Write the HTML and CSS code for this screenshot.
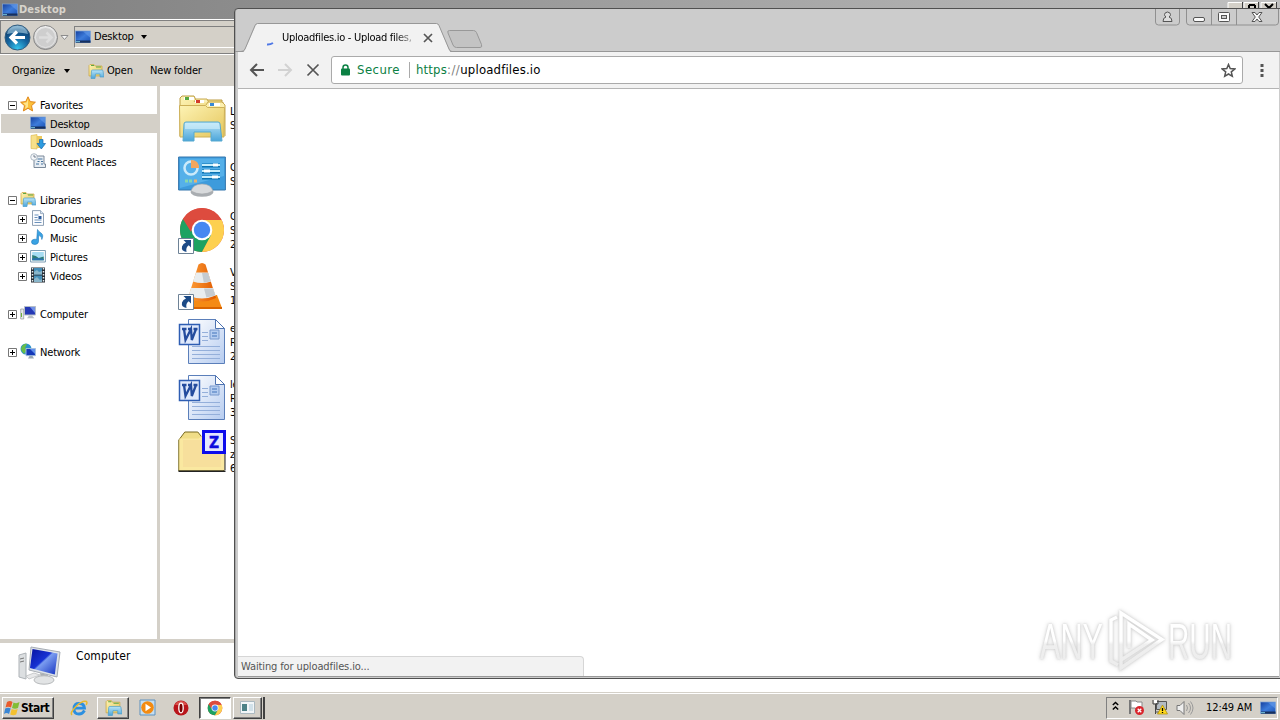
FILE: index.html
```html
<!DOCTYPE html>
<html lang="en">
<head>
<meta charset="utf-8">
<title>Desktop</title>
<link rel="stylesheet" href="styles.css">
</head>
<body>
<svg class="defs" aria-hidden="true">
<defs>
<linearGradient id="gBlue" x1="0" y1="0" x2="1" y2="1"><stop offset="0" stop-color="#163f9d"/><stop offset=".5" stop-color="#3d7cdb"/><stop offset="1" stop-color="#1c52b5"/></linearGradient>
<linearGradient id="gFold" x1="0" y1="0" x2="1" y2="1"><stop offset="0" stop-color="#fdf3b4"/><stop offset="1" stop-color="#e5c65c"/></linearGradient>
<linearGradient id="gSky" x1="0" y1="0" x2="0" y2="1"><stop offset="0" stop-color="#b9e4f6"/><stop offset="1" stop-color="#4ba5da"/></linearGradient>
<linearGradient id="gDoc" x1="0" y1="0" x2="1" y2="1"><stop offset="0" stop-color="#fff"/><stop offset="1" stop-color="#b6ccf0"/></linearGradient>
<radialGradient id="gNav" cx=".5" cy=".95" r=".9"><stop offset="0" stop-color="#35c5ee"/><stop offset=".5" stop-color="#14649f"/><stop offset=".85" stop-color="#0e4577"/><stop offset="1" stop-color="#7aa6c6"/></radialGradient>
<linearGradient id="gGrey" x1="0" y1="0" x2="0" y2="1"><stop offset="0" stop-color="#f4f4f4"/><stop offset="1" stop-color="#b4b4b4"/></linearGradient>
<linearGradient id="gScreen" x1="0" y1="0" x2="1" y2="1"><stop offset="0" stop-color="#0713a0"/><stop offset=".45" stop-color="#1733d4"/><stop offset=".5" stop-color="#7b9df0"/><stop offset="1" stop-color="#1431c0"/></linearGradient>
<linearGradient id="gCone" x1="0" y1="0" x2="1" y2="0"><stop offset="0" stop-color="#ffa03a"/><stop offset="1" stop-color="#e05a00"/></linearGradient>
<linearGradient id="gMark" gradientUnits="userSpaceOnUse" x1="0" y1="8" x2="0" y2="64"><stop offset="0" stop-color="#fff"/><stop offset=".5" stop-color="#fff"/><stop offset=".56" stop-color="#efefef"/><stop offset="1" stop-color="#ececec"/></linearGradient>

<symbol id="desk" viewBox="0 0 16 14"><rect x=".5" y="1" width="15" height="11.5" fill="url(#gBlue)" stroke="#7fa5d8" stroke-width=".7"/><path d="M1 10.500h14.500v2.300H1z" fill="#17305e"/><path d="M1 11.200h4v1H1z" fill="#7fd0e8"/><path d="M8 1.500h7v6z" fill="#6fa4ee" opacity=".5"/></symbol>
<symbol id="lib" viewBox="0 0 16 16"><path d="M1 2.500l1-1h4l1 1.500h7v10H1z" fill="url(#gFold)" stroke="#c9a541" stroke-width=".7"/><path d="M3 2.500h3M8 4h5" stroke="#5ca847"/><path d="M3.500 8q0-1 1-1h9.500q1 0 1 1l1 6h-4v-3H7.500l-.5 4.500H3z" fill="url(#gSky)" stroke="#4d9fcc" stroke-width=".7"/></symbol>
<symbol id="star" viewBox="0 0 16 16"><path d="M8 .8l2.200 4.800 5.200.6-3.900 3.500 1.100 5.200L8 12.300l-4.600 2.600 1.100-5.200L.6 6.200l5.200-.6z" fill="#fbc03a" stroke="#e0861a"/><path d="M8 3v8l-3 2 .8-3.600L3 7l3.600-.5z" fill="#ffe48c"/></symbol>
<symbol id="down" viewBox="0 0 16 16"><path d="M1 1.500l6-1v14.500l-6-.5z" fill="#f7e08a" stroke="#d9b44a" stroke-width=".6"/><path d="M7 2h5v12H7z" fill="#ecc95e"/><path d="M9.500 5.500h3.500v4h2.500l-4.200 5.500L7 9.500h2.500z" fill="#2d9be0" stroke="#1769ad" stroke-width=".7"/></symbol>
<symbol id="recent" viewBox="0 0 16 16"><path d="M4 3h10v8h1.500v3.500H4z" fill="#e7edf3" stroke="#6d7e90" stroke-width=".9"/><path d="M7.500 6h5M7.500 8.500h2M11 8.500h2M6 11h3M11 11h2" stroke="#46749f"/><circle cx="4" cy="4" r="3.300" fill="#f5f7fa" stroke="#9ba9b6" stroke-width=".8"/><path d="M4 2v2h2" stroke="#567" fill="none" stroke-width=".8"/></symbol>
<symbol id="docs" viewBox="0 0 16 16"><path d="M2.500.6h8l3 3v11.800h-11z" fill="#fcfdff" stroke="#8296ad" stroke-width=".9"/><path d="M10.500.6v3h3" fill="#d8e6f5" stroke="#8296ad" stroke-width=".7"/><path d="M4.500 5h4M4.500 7.500h3M4.500 10h7M4.500 12.500h7" stroke="#6b91bb"/><path d="M8.500 6h3v3h-3z" fill="#2c5c9e"/></symbol>
<symbol id="music" viewBox="0 0 16 16"><path d="M7.500.5q1 2 3.500 3.500 3 2 .8 6.500.3-3.500-3.300-4.200v6.200q0 2.700-3.500 3Q1.500 15.500 1.500 13q0-2.500 3-2.700 1.200-.2 2.200.3z" fill="#3aa3e3" stroke="#1d78bd" stroke-width=".6"/></symbol>
<symbol id="pics" viewBox="0 0 16 16"><path d="M.6 2.500h14.800v11.500H.6z" fill="#fff" stroke="#6f93ab" stroke-width=".9"/><path d="M2.200 4h11.600v8.300H2.200z" fill="#a6dcf2"/><path d="M2.200 7l3.500 1 3 2 5-1.500v3.800H2.200z" fill="#2d7c76"/><path d="M2.200 10.500q5-1 11.600.5v1.300H2.200z" fill="#2b72ad"/></symbol>
<symbol id="vids" viewBox="0 0 16 16"><path d="M1 .5h14v15H1z" fill="#252c35"/><path d="M4 1h8v6.500H4zM4 8.500h8V15H4z" fill="#458fb9"/><path d="M4 5l3-2 2 2 3-1v3.500H4zM4 12l3-2 3 3 2-1v3H4z" fill="#89b6cb"/><path d="M2.500 1v14M13.500 1v14" stroke="#e6edf0" stroke-width="1.500" stroke-dasharray="1.500 1.500"/></symbol>
<symbol id="comp" viewBox="0 0 16 16"><path d="M.7 4h3v10h-3z" fill="#e6e8ea" stroke="#8e959b" stroke-width=".7"/><path d="M1.500 8v4" stroke="#6cb23a"/><path d="M4.500 1.500h11v8.500h-11z" fill="#2539b5" stroke="#b4bdc8"/><path d="M10 2h5v6z" fill="#7191e8"/><path d="M9 10.500h3l2.500 2.800H7z" fill="#b9bfc5"/></symbol>
<symbol id="net" viewBox="0 0 16 16"><circle cx="6" cy="6" r="5.500" fill="#2a91cd"/><path d="M2 3q3-3 5-2L5 5l2 2-3 4Q1 8 1 6z" fill="#67bd48"/><path d="M6 5.500h9.500v7.200H6z" fill="#1438b8" stroke="#a9c4de" stroke-width=".9"/><path d="M10 6h5v5z" fill="#6090ec"/><path d="M9.500 13h3l1.500 2.500H8z" fill="#98a7b5"/></symbol>
<symbol id="plus" viewBox="0 0 9 9"><path d="M.5.5h8v8h-8z" fill="#fff" stroke="#777"/><path d="M2 4.500h5M4.500 2v5" stroke="#000"/></symbol>
<symbol id="minus" viewBox="0 0 9 9"><path d="M.5.5h8v8h-8z" fill="#fff" stroke="#777"/><path d="M2 4.500h5" stroke="#000"/></symbol>
<symbol id="chrome" viewBox="0 0 48 48"><circle cx="24" cy="24" r="22" fill="#dd4b3e"/><path d="M24 24L4.950 13A22 22 0 0 0 24 46l9.500-16.500z" fill="#1da261"/><path d="M24 14h19.600A22 22 0 0 1 24 46l9-17z" fill="#fdd050"/><path d="M4.950 13A22 22 0 0 1 43.600 14H24z" fill="#dd4b3e"/><path d="M5 13l8 13 3-7 8-5z" fill="#dd4b3e"/><circle cx="24" cy="24" r="10.300" fill="#fff"/><circle cx="24" cy="24" r="8.200" fill="#4688f1"/></symbol>
<symbol id="short" viewBox="0 0 16 16"><path d="M.5.5h15v15H.5z" fill="#fff" stroke="#6e8296"/><path d="M13 2v7.500l-2.300-2.200Q7.500 9.500 8.500 14 3 13 4 8.500 5 5.500 8 4.500L5.500 2z" fill="#1d4b87"/></symbol>
<symbol id="word" viewBox="0 0 48 48"><path d="M10.500 1.500h27l9 9v35h-36z" fill="url(#gDoc)" stroke="#5b7fba"/><path d="M37.500 1.500v9h9z" fill="#fff" stroke="#4e73b1"/><path d="M24 14.500h6M24 18.500h6M24 22.500h6M14 28.500h28M14 32.500h28M14 36.500h28M14 40.500h28" stroke="#94afda"/><path d="M32 12h9v9h-9z" fill="#b5cdf0" stroke="#7899cd"/><path d="M34 14h5v2h-5zM34 17h5v2h-5z" fill="#7ba0d5"/><path d="M1.500 6.500h20v20h-20z" fill="#dfe9fb" stroke="#2e5eb3" stroke-width="1.500"/><path d="M4 11h4.500M10 11h4M15.500 11h4M6 11l1.500 11L13 11l.8 11L18 11" fill="none" stroke="#244c9e" stroke-width="2.300"/></symbol>
<symbol id="folders" viewBox="0 0 48 48"><path d="M2 4l2-2h12l2 4h26v36H2z" fill="url(#gFold)" stroke="#bc9d45"/><path d="M6 3h10v3H6z" fill="#fff"/><path d="M7 3h4v3H7z" fill="#58a83f"/><path d="M16 8l2-3h11l2 4h15" fill="#fbf0b5" stroke="#c8a94f"/><path d="M17 6h9v3h-9z" fill="#fff"/><path d="M18 6h4v3h-4z" fill="#d33b2a"/><path d="M28 11l2-3h14l3 3v31" fill="#fcf0b0" stroke="#c8a94f"/><path d="M31 9h11v3H31z" fill="#fff"/><path d="M32 9h4v3h-4z" fill="#3a89d5"/><path d="M1.500 11.500h26l2 2h17L46 43H2z" fill="url(#gFold)" stroke="#cdb058"/><path d="M6 30q0-2 2-2h32q2 0 2 2l2 17H33v-9H16v9H5z" fill="url(#gSky)" stroke="#57a9cf"/><path d="M7 29h34l1 6H7z" fill="#d3f0fb" opacity=".6"/></symbol>
<symbol id="panel" viewBox="0 0 48 48"><path d="M.6 7h46.800v33H.6z" fill="#3d9bdc" stroke="#3476ad"/><path d="M2 8.500h44V26L2 38z" fill="#55b0e9"/><circle cx="13" cy="18" r="6.500" fill="none" stroke="#cbeafa" stroke-width="2.500"/><path d="M13 18v-8q8 0 8 8z" fill="#f4a65b"/><path d="M24 15.500h18M24 21.500h18M24 27.500h18" stroke="#0a72b1" stroke-width="4"/><path d="M24 15h18M24 21h18M24 27h18" stroke="#c8eefb" stroke-width="2"/><path d="M35 15h5M26 21h6M34 27h6" stroke="#fff" stroke-width="3"/><path d="M7 31h3M11 31h3" stroke="#86d8ad" stroke-width="3"/><path d="M16 31h3" stroke="#e8b26e" stroke-width="3"/><ellipse cx="24" cy="42" rx="11.500" ry="4.800" fill="#a9adb1"/><path d="M13 41q2-7 11-7t11 7q-11 6-22 0" fill="#d8dadc" stroke="#a5a8ab" stroke-width=".6"/></symbol>
<symbol id="vlc" viewBox="0 0 48 48"><path d="M10 33h29l5 13H4z" fill="#f58a14"/><path d="M4 45h40v2H4z" fill="#d96400"/><path d="M20.500 2.500q3.500-3 7 0L38 36q-14 7-28 0z" fill="url(#gCone)"/><path d="M18 10.500h12l3 9q-9 3-18 0zM13 26h22l2.700 7.500q-14 6-27 0z" fill="#e9edef"/><path d="M24 11h6l2.800 8.500-7 1zM26 26.500h9l2.400 7-9 2z" fill="#c5cbd0"/></symbol>
<symbol id="zip" viewBox="0 0 48 48"><path d="M.8 10l6-8h13l4 5h22v34H.8z" fill="#f0dd87" stroke="#766820"/><path d="M1.500 8.500h19l4-3h22V40h-45z" fill="#fae8a0"/><path d="M5 10h38v27H5z" fill="#f7df9c"/><path d="M.5 40.500h47V42H.5zM46.500 10v31h1V10z" fill="#222"/><path d="M25.500 1.500h21v21h-21z" fill="#e4e7ff" stroke="#0c0cec" stroke-width="3"/><text x="36" y="17.500" text-anchor="middle" font-family="DejaVu Sans" font-weight="bold" font-size="15.500" letter-spacing="0" fill="#0c0cdd" stroke="#0c0cdd" stroke-width=".4">Z</text></symbol>
</defs>
</svg>

<main class="desktop">
<section class="explorer">
  <header class="title"><svg width="16" height="14"><use href="#desk"/></svg><span>Desktop</span></header>
  <nav class="address">
    <svg class="arrows" width="70" height="30" viewBox="0 0 70 30"><circle cx="17.500" cy="15.500" r="12.500" fill="url(#gNav)" stroke="#315c7e"/><path d="M7 12Q9 4 17.500 4T28 12q-10-3-21 0" fill="#a3cce2" opacity=".65"/><path d="M25 15.500H12M17 9.500l-6 6 6 6" fill="none" stroke="#fff" stroke-width="3.200"/><circle cx="45.500" cy="15.500" r="12" fill="url(#gGrey)" stroke="#858585"/><circle cx="45.500" cy="15.500" r="10" fill="#cecece" stroke="#e6e6e6"/><path d="M39 15.500h11M46.500 10.500l5 5-5 5" fill="none" stroke="#ddd" stroke-width="2.500"/><path d="M61 13.500h7l-3.500 4z" fill="#f5f5f5" stroke="#8c8c8c"/></svg>
    <div class="path"><svg width="16" height="14"><use href="#desk"/></svg><span>Desktop</span><i class="caret"></i></div>
  </nav>
  <div class="commands"><span class="organize">Organize</span><i class="caret"></i><svg class="open-icon" width="16" height="16"><use href="#lib"/></svg><span class="open">Open</span><span>New folder</span></div>
  <div class="body">
    <aside class="tree">
      <div class="row"><svg class="pm"><use href="#minus"/></svg><svg class="ic"><use href="#star"/></svg><span>Favorites</span></div>
      <div class="row child selected"><svg class="ic"><use href="#desk"/></svg><span>Desktop</span></div>
      <div class="row child"><svg class="ic"><use href="#down"/></svg><span>Downloads</span></div>
      <div class="row child"><svg class="ic"><use href="#recent"/></svg><span>Recent Places</span></div>
      <div class="row"></div>
      <div class="row"><svg class="pm"><use href="#minus"/></svg><svg class="ic"><use href="#lib"/></svg><span>Libraries</span></div>
      <div class="row sub"><svg class="pm"><use href="#plus"/></svg><svg class="ic"><use href="#docs"/></svg><span>Documents</span></div>
      <div class="row sub"><svg class="pm"><use href="#plus"/></svg><svg class="ic"><use href="#music"/></svg><span>Music</span></div>
      <div class="row sub"><svg class="pm"><use href="#plus"/></svg><svg class="ic"><use href="#pics"/></svg><span>Pictures</span></div>
      <div class="row sub"><svg class="pm"><use href="#plus"/></svg><svg class="ic"><use href="#vids"/></svg><span>Videos</span></div>
      <div class="row"></div>
      <div class="row"><svg class="pm"><use href="#plus"/></svg><svg class="ic"><use href="#comp"/></svg><span>Computer</span></div>
      <div class="row"></div>
      <div class="row"><svg class="pm"><use href="#plus"/></svg><svg class="ic"><use href="#net"/></svg><span>Network</span></div>
    </aside>
    <div class="files">
      <div class="file"><svg><use href="#folders"/></svg><p>L<br>S</p></div>
      <div class="file"><svg><use href="#panel"/></svg><p>C<br>S</p></div>
      <div class="file"><svg><use href="#chrome"/><use href="#short" x="0" y="32" width="16" height="16"/></svg><p>G<br>S<br>2</p></div>
      <div class="file"><svg><use href="#vlc"/><use href="#short" x="0" y="32" width="16" height="16"/></svg><p>V<br>S<br>1</p></div>
      <div class="file"><svg><use href="#word"/></svg><p>e<br>R<br>2</p></div>
      <div class="file"><svg><use href="#word"/></svg><p>le<br>R<br>3</p></div>
      <div class="file"><svg><use href="#zip"/></svg><p>S<br>z<br>6</p></div>
    </div>
  </div>
  <footer class="details">
    <svg width="46" height="40" viewBox="0 0 46 40"><path d="M1 9l7-2v26l-7-2z" fill="#dcdfe1" stroke="#aeb3b7"/><path d="M2 13l4-1M2 16l4-1" stroke="#777"/><path d="M13 1l29 5-3 25-28-7z" fill="#dde2e8" stroke="#a7adb4"/><path d="M14.500 3l25 4.500-2.700 21L12 22z" fill="url(#gScreen)"/><path d="M22 27l8 2-1 4h-6z" fill="#aaafb3"/><ellipse cx="26" cy="34" rx="10" ry="4.200" fill="#e2e4e5" stroke="#b7babc"/><path d="M8 30l8-3 6 2-11 4z" fill="#e8e9ea" stroke="#b7babc" stroke-width=".7"/></svg>
    <span>Computer</span>
  </footer>
</section>

<div class="behind-buttons"><svg width="52" height="10" viewBox="0 0 52 10"><path d="M1 2h15v8H1zM17 2h15v8H17zM34 2h15v8H34z" fill="#d4d0c8"/><path d="M1 10V2.500h15M17 10V2.500h15M34 10V2.500h15" stroke="#fff" fill="none"/><path d="M15.500 2v8M31.500 2v8M49.500 2v8" stroke="#404040"/><path d="M22 5h6M22 5v5M28 5v3M38 4l5 5M46 4l-5 5" stroke="#000" stroke-width="2" fill="none"/></svg></div>

<section class="browser">
  <div class="tabstrip">
    <svg class="tabs" width="260" height="44" viewBox="0 0 260 44"><path d="M0 43.500h5q4 0 5-2.500l10.500-24q1-2.500 3-2.500H201q2 0 3 2.500l10 24q1 2.500 4 2.500H260" fill="#f2f2f2"/><path d="M0 42.500h6q3 0 4-2.500l10-23.500q1-2 2.500-2H201.500q1.500 0 2.500 2L214 40q1 2.500 3 2.500H260" fill="none" stroke="#979797"/><path d="M214.500 21.500h24q2 0 3 2l5 12q1 3-1.500 3H221.500q-2.500 0-3.500-2.500l-5-12q-1-2.500 1.500-2.500z" fill="#c3c3c3" stroke="#989898"/><path d="M32 35.500q3 .3 6-1.500" stroke="#4f78e6" stroke-width="2" fill="none"/></svg>
    <div class="tab"><span class="tab-title">Uploadfiles.io - Upload files,</span><svg width="10" height="10" viewBox="0 0 10 10"><path d="M1 1l8 8M9 1L1 9" stroke="#555" stroke-width="1.700"/></svg></div>
    <svg class="winbtns" width="126" height="17" viewBox="0 0 126 17"><path d="M.5 0v13q0 3 3 3h18q3 0 3-3V0M31.500 0v13q0 3 3 3h86q3 0 3-3V0M56.500 0v16M81.500 0v16" fill="none" stroke="#909090"/><g fill="#fafafa" stroke="#555"><rect x="38.500" y="8.500" width="11" height="4" rx="1.500"/><rect x="63.500" y="3.500" width="11" height="9" rx="1"/><rect x="66.500" y="6.500" width="5" height="3" fill="#ccc"/><path d="M8 12.500q0-4 3-4.500-1.500-1-1.500-2.500 0-2 3-2.500 3 .5 3 2.500 0 1.500-1.500 2.500 3 .5 3 4.500z" fill="#ddd"/><path d="M97 3.500h3l2 2.500 2-2.500h3L103.700 8l3.300 4.500h-3L102 10l-2 2.500h-3l3.300-4.500z"/></g></svg>
  </div>
  <div class="toolbar">
    <svg class="navs" width="80" height="20" viewBox="0 0 80 20"><path d="M18 10H5M11 4l-6 6 6 6" fill="none" stroke="#555" stroke-width="2"/><path d="M32 10h13M39 4l6 6-6 6" fill="none" stroke="#d2d2d2" stroke-width="2"/><path d="M61.500 4.500l11 11M72.500 4.500l-11 11" stroke="#555" stroke-width="1.700"/></svg>
    <div class="omnibox">
      <svg class="lock" width="9" height="12" viewBox="0 0 9 12"><path d="M2 6V3.500Q2 1 4.500 1T7 3.500V6" fill="none" stroke="#0b8043" stroke-width="1.500"/><rect x="0" y="4.500" width="9" height="7" rx="1" fill="#0b8043"/></svg>
      <span class="secure">Secure</span><i class="sep"></i><span class="url"><b>https</b><em>://</em>uploadfiles.io</span>
      <svg class="fav" width="15" height="15" viewBox="0 0 15 15"><path d="M7.500 1.500l1.700 4.100 4.500.4-3.400 2.900 1 4.400-3.800-2.300-3.800 2.300 1-4.400L1.300 6l4.500-.4z" fill="none" stroke="#555" stroke-width="1.500"/></svg>
    </div>
    <svg class="menu" width="4" height="14" viewBox="0 0 4 14"><path d="M.5 1h3v3h-3zM.5 6h3v3h-3zM.5 11h3v3h-3z" fill="#555"/></svg>
  </div>
  <div class="page"><div class="status"><span>Waiting for uploadfiles.io...</span></div></div>
</section>

<svg class="watermark" width="247" height="74" viewBox="0 0 247 74"><g class="mark"><text x="7" y="54" textLength="63" lengthAdjust="spacingAndGlyphs">ANY</text><text x="135" y="54" textLength="64" lengthAdjust="spacingAndGlyphs">RUN</text><path d="M84 12l-6 3v41l7 4M88 54V8l41 26.500L88 63v-8l31-20-23-16v24" fill="none" stroke="url(#gMark)" stroke-width="3.500"/></g></svg>

<footer class="taskbar">
  <div class="start"><svg width="17" height="16" viewBox="0 0 17 16"><path d="M3 2q3-2 5.500 0L7 7.500q-3-1.500-5.500 0z" fill="#e95b2c"/><path d="M9.500 2.500q3 1.500 6-.5L14 8q-3 1.500-6 0z" fill="#82bd36"/><path d="M1.200 8.500q3-1.500 5.500 0L5 14q-2.500-2-5 0z" fill="#3a86d4"/><path d="M7.700 9q3 1.500 6 0l-1.500 5.500q-3 1.500-6 0z" fill="#f4c12f"/></svg><span>Start</span></div>
  <div class="task"><svg width="18" height="18" viewBox="0 0 18 18"><path d="M14.500 11.500q-2 3.500-5.500 3.500-5 0-5-5.500T9.500 4.500q4.500 0 5 4.700H5" fill="none" stroke="#2b8fe0" stroke-width="2.800"/><path d="M2 16Q-.5 14 6 7.500T16.500 2.500q1 .8-.3 3.500" fill="none" stroke="#e8b92c" stroke-width="1.500"/></svg></div>
  <div class="task raised"><svg width="17" height="17"><use href="#lib"/></svg></div>
  <div class="task"><svg width="17" height="17" viewBox="0 0 17 17"><path d="M1 1h15v15H1z" fill="#c5def1" stroke="#5d91be"/><circle cx="8.500" cy="8.500" r="6.300" fill="#f38b12"/><path d="M6.500 4.800l5.500 3.700-5.500 3.700z" fill="#fff"/></svg></div>
  <div class="task"><svg width="16" height="16" viewBox="0 0 16 16"><circle cx="8" cy="8" r="7.500" fill="#b9151b"/><path d="M2 5q2-4 6-4t6 4" fill="#d9504a"/><ellipse cx="8" cy="8" rx="2.200" ry="4.800" fill="#700" stroke="#fff" stroke-width="1.300"/></svg></div>
  <div class="task active"><svg width="16" height="16"><use href="#chrome"/></svg></div>
  <div class="task raised last"><svg width="15" height="13" viewBox="0 0 15 13"><path d="M.5.5h14v12H.5z" fill="#f2f6f8" stroke="#abb9c0"/><path d="M2 3h5v7H2z" fill="#4d8287"/><path d="M9 3h4v7H9z" fill="#d1e1e9"/></svg></div>
  <div class="edge"></div>
  <div class="tray">
    <svg class="chev" width="7" height="10" viewBox="0 0 7 10"><path d="M.8 4l2.700-2.500L6.200 4M.8 8.500L3.500 6l2.700 2.500" fill="none" stroke="#000" stroke-width="1.500"/></svg>
    <svg class="flag" width="17" height="17" viewBox="0 0 17 17"><path d="M2 1v14" stroke="#777" stroke-width="2"/><path d="M3 2h5l1 1h5v7H8L7 9H3z" fill="#fff" stroke="#888"/><circle cx="11.500" cy="11.500" r="4.500" fill="#d9242b"/><path d="M9.700 9.700l3.600 3.600M13.300 9.700l-3.600 3.600" stroke="#fff" stroke-width="1.300"/></svg>
    <svg class="lan" width="17" height="17" viewBox="0 0 17 17"><path d="M4.500 2.500h10v8h-10z" fill="#b3bbc2" stroke="#555"/><path d="M1 1v4h5V1M3.500 5v10" fill="none" stroke="#444"/><path d="M2 1h3v3H2z" fill="#fff"/><path d="M3 13h6" stroke="#555"/><path d="M10.500 6l5 9h-10z" fill="#ffd91c" stroke="#a88600" stroke-width=".7"/><path d="M10.500 9v3M10.500 13v1" stroke="#000" stroke-width="1.300"/></svg>
    <svg class="vol" width="18" height="16" viewBox="0 0 18 16"><path d="M1 5.500h3l4-4v13l-4-4H1z" fill="#eee" stroke="#777"/><path d="M10.500 5q2 3 0 6M12.500 3q4 5 0 10M14.500 1.500q5 6.500 0 13" fill="none" stroke="#999"/></svg>
    <span class="clock">12:49 AM</span><svg class="show" width="16" height="14"><use href="#desk"/></svg>
  </div>
</footer>
</main>
</body>
</html>
```
FILE: styles.css
```css
* { box-sizing: border-box; }
body { margin: 0; width: 1280px; height: 720px; overflow: hidden; font: 11px/14px "DejaVu Sans Condensed", "DejaVu Sans", sans-serif; font-stretch: condensed; letter-spacing: -.17px; color: #000; background: #fff; }
svg { display: block; flex: none; }
span { white-space: nowrap; }
.defs { position: absolute; width: 0; height: 0; }
.desktop { position: relative; display: flex; flex-direction: column; width: 1280px; height: 720px; overflow: hidden; }
.explorer { display: flex; flex-direction: column; height: 692px; }
.title { display: flex; align-items: center; height: 19px; padding: 0 0 0 2px; color: #d8d4cc; font-weight: bold; letter-spacing: .15px; background: linear-gradient(90deg, #808080, #c0c0c0); }
.title span { margin-left: 1px; }
.address { display: flex; align-items: center; height: 35px; background: #d4d0c8; border-top: 1px solid #fff; border-bottom: 1px solid #808080; box-shadow: inset 1px 1px #808080; }
.arrows { margin: 0 4px 0 0; }
.path { display: flex; align-items: center; flex: 1; height: 22px; padding-left: 0; border: 1px solid #808080; border-bottom-color: #fff; }
.path span { margin-left: 3px; }
.caret { border: 3.5px solid transparent; border-top: 4px solid #000; border-bottom: 0; margin-left: 7px; }
.commands { display: flex; align-items: center; height: 32px; background: #d4d0c8; padding-left: 12px; border-top: 1px solid #fff; }
.organize { width: 45px; }
.open-icon { margin: 0 3px 0 18px; }
.open { width: 43px; }
.body { display: flex; height: 553px; }
.tree { width: 160px; padding: 9px 0 0 1px; border-right: 3px solid #d4d0c8; }
.row { display: flex; align-items: center; height: 19px; padding-left: 7px; }
.row span { padding-top: 2px; }
.row.sub { padding-left: 17px; }
.row.child { padding-left: 29px; }
.selected { background: #d4d0c8; }
.pm { width: 9px; height: 9px; margin: 2px 3px 0 0; }
.ic { width: 16px; height: 16px; margin: -1px 4px 0 0; }
.files { padding: 4px 0 0 18px; }
.file { display: flex; align-items: center; height: 56px; }
.file svg { width: 48px; height: 48px; }
.file p { margin: 2px 0 0 4px; }
.details { display: flex; flex: 1; gap: 12px; border-top: 4px solid #d4d0c8; padding: 3px 0 0 18px; }
.details span { padding-top: 3px; font-size: 12px; letter-spacing: .1px; }
.behind-buttons { position: absolute; left: 1227px; top: 0; }
.browser { position: absolute; left: 234px; top: 8px; width: 1050px; height: 671px; display: flex; flex-direction: column; border: 1px solid #505050; border-radius: 4px 0 0 4px; background: #ccc; overflow: hidden; padding: 0 0 1px 3px; box-shadow: inset 1px 0 #aaa, inset 0 1px #ddd; }
.tabstrip { display: flex; height: 43px; border-bottom: 1px solid #979797; background: #ccc; }
.tabs { position: absolute; left: 0; top: 0; }
.tab { position: relative; display: flex; align-items: center; width: 210px; height: 28px; margin-top: 15px; padding-left: 44px; }
.tab-title { width: 131px; overflow: hidden; margin-right: 10px; letter-spacing: -.28px; -webkit-mask-image: linear-gradient(90deg, #000 113px, transparent 137px); mask-image: linear-gradient(90deg, #000 113px, transparent 137px); }
.winbtns { margin-left: 707px; }
.toolbar { position: relative; display: flex; align-items: center; width: 1041px; height: 37px; border-bottom: 1px solid #b4b4b4; background: #f2f2f2; }
.navs { margin-left: 8px; }
.omnibox { display: flex; align-items: center; width: 912px; height: 28px; margin-left: 5px; padding-left: 9px; background: #fff; border: 1px solid #aaa; border-radius: 3px; font-size: 13px; }
.secure { margin-left: 7px; width: 52px; color: #0b8043; letter-spacing: .45px; }
.sep { width: 1px; height: 16px; background: #aaa; margin-right: 6px; }
.url { flex: 1; letter-spacing: .17px; }
.url b { color: #0b8043; font-weight: 400; }
.url em { color: #808080; font-style: normal; letter-spacing: .5px; }
.fav { margin-right: 6px; }
.menu { margin-left: 17px; }
.page { flex: 1; display: flex; align-items: flex-end; width: 1041px; background: #fff; border-bottom: 1px solid #999; }
.status { display: flex; align-items: center; width: 346px; height: 20px; padding-left: 3px; background: #f2f2f2; border: 1px solid #d6d6d6; border-left: 0; border-bottom: 0; border-radius: 0 4px 0 0; color: #555; letter-spacing: -.12px; }
.watermark { position: absolute; left: 1033px; top: 605px; overflow: visible; }
.mark { fill: url(#gMark); font: 50px "Liberation Sans Narrow", "Liberation Sans", sans-serif; letter-spacing: 0; filter: drop-shadow(0 0 1px #ccc) drop-shadow(0 0 2px #ddd); }
.taskbar { display: flex; align-items: center; height: 28px; padding: 3px 2px 1px; background: #d4d0c8; border-top: 1px solid #d4d0c8; box-shadow: inset 0 1px #fff; }
.start, .raised { background: #d4d0c8; border: 1px solid; border-color: #fff #404040 #404040 #fff; box-shadow: inset -1px -1px #808080; }
.start { display: flex; align-items: center; width: 52px; height: 22px; padding-left: 1px; margin-right: 9px; font: bold 12px "DejaVu Sans Condensed", sans-serif; letter-spacing: -.5px; }
.task { display: flex; align-items: center; justify-content: center; width: 32px; height: 22px; margin-right: 2px; }
.task.active { background: #fff; border: 1px solid; border-color: #404040 #fff #fff #404040; box-shadow: inset 1px 1px #808080; }
.task.last { width: 29px; margin-right: 0; }
.edge { width: 3px; height: 22px; border-right: 2px solid #404040; }
.tray { display: flex; align-items: center; width: 172px; height: 22px; margin-left: auto; padding-left: 5px; border: 1px solid; border-color: #808080 #fff #fff #808080; }
.chev { margin-top: -3px; }
.flag { margin-left: 9px; }
.lan { margin-left: 7px; }
.vol { margin-left: 7px; }
.clock { margin-left: 12px; width: 54px; letter-spacing: -.1px; }
```
